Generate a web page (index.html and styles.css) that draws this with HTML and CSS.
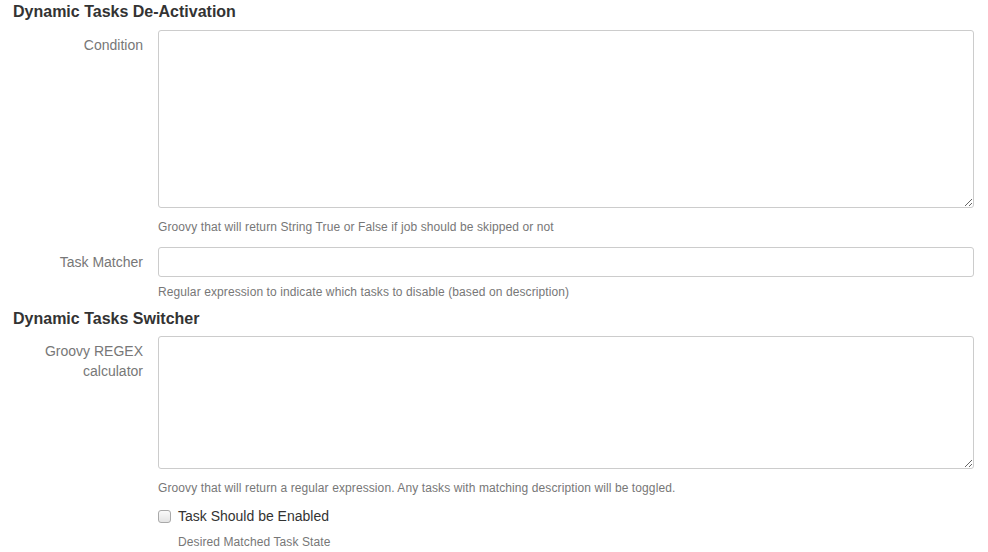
FILE: index.html
```html
<!DOCTYPE html>
<html lang="en">
<head>
<meta charset="utf-8">
<title>Dynamic Tasks</title>
<link rel="stylesheet" href="styles.css">
</head>
<body>
<div class="page">
  <h3 class="section-title">Dynamic Tasks De-Activation</h3>
  <div class="row first">
    <label class="label">Condition</label>
    <div class="field">
      <textarea class="control area-lg"></textarea>
      <div class="help help-gap">Groovy that will return String True or False if job should be skipped or not</div>
    </div>
  </div>
  <div class="row matcher">
    <label class="label">Task Matcher</label>
    <div class="field">
      <input class="control input" type="text">
      <div class="help help-tight">Regular expression to indicate which tasks to disable (based on description)</div>
    </div>
  </div>
  <h3 class="section-title second">Dynamic Tasks Switcher</h3>
  <div class="row second-row">
    <label class="label">Groovy REGEX<br>calculator</label>
    <div class="field">
      <textarea class="control area-md"></textarea>
      <div class="help help-gap">Groovy that will return a regular expression. Any tasks with matching description will be toggled.</div>
      <label class="check">
        <input type="checkbox" class="box">
        <span>Task Should be Enabled</span>
      </label>
      <div class="help sub">Desired Matched Task State</div>
    </div>
  </div>
</div>
</body>
</html>
```

FILE: styles.css
```css
html, body {
  margin: 0;
  padding: 0;
  background: #fff;
}
body {
  font-family: "Liberation Sans", Arial, Helvetica, sans-serif;
  color: #333;
}
.page {
  padding: 0 14px 0 0;
}
.section-title {
  margin: 0;
  padding-left: 13px;
  font-size: 16px;
  font-weight: bold;
  line-height: 24px;
  color: #333;
}
.section-title.second {
  margin-top: 7px;
}
.row {
  display: grid;
  grid-template-columns: 143px 1fr;
  column-gap: 15px;
}
.row.first {
  margin-top: 6px;
}
.row.second-row {
  margin-top: 5px;
}
.row.matcher {
  margin-top: 12px;
}
.label {
  text-align: right;
  padding-top: 5px;
  font-size: 14px;
  line-height: 20px;
  color: #777;
}
.field {
  min-width: 0;
}
.control {
  display: block;
  width: 100%;
  box-sizing: border-box;
  border: 1px solid #ccc;
  border-radius: 3px;
  background: #fff;
  margin: 0;
  padding: 6px 10px;
  font-family: inherit;
  font-size: 14px;
  outline: none;
}
.area-lg {
  height: 178px;
}
.area-md {
  height: 133px;
}
.input {
  height: 30px;
}
.help {
  font-size: 12px;
  line-height: 16px;
  color: #777;
  letter-spacing: 0.1px;
}
.help-gap {
  margin-top: 11px;
}
.help-tight {
  margin-top: 7px;
}
.check {
  display: flex;
  align-items: center;
  margin-top: 10px;
  font-size: 14px;
  line-height: 20px;
  color: #333;
}
.box {
  appearance: none;
  -webkit-appearance: none;
  width: 13px;
  height: 13px;
  margin: 0 7px 0 0;
  border: 1px solid #a9a9a9;
  border-radius: 3px;
  background: linear-gradient(#fafafa, #e4e4e4);
  box-sizing: border-box;
}
.sub {
  margin-top: 8px;
  padding-left: 20px;
}
```
